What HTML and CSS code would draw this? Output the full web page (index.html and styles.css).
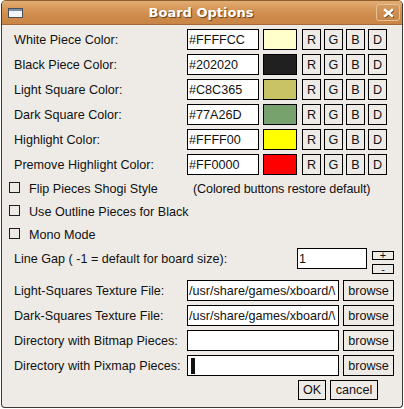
FILE: index.html
```html
<!DOCTYPE html>
<html>
<head>
<meta charset="utf-8">
<title>Board Options</title>
<link rel="stylesheet" href="styles.css">
</head>
<body>
<div class="window">
  <div class="titlebar">
    <svg class="winicon" width="15" height="10" viewBox="0 0 15 10">
      <rect x="0.5" y="0.5" width="14" height="9" fill="#e9ecef" stroke="#4a4f57"/>
      <rect x="1" y="1" width="13" height="2" fill="#7d8fa6"/>
      <rect x="1" y="3" width="13" height="6" fill="#f4f5f7"/>
    </svg>
    <div class="title">Board Options</div>
    <div class="close">
      <svg width="11" height="10" viewBox="0 0 11 10">
        <path d="M2 2 L9 8 M9 2 L2 8" stroke="#6b3c14" stroke-width="2.6" stroke-linecap="square" transform="translate(0.6,0.8)"/>
        <path d="M2 2 L9 8 M9 2 L2 8" stroke="#ffffff" stroke-width="2.4" stroke-linecap="square"/>
      </svg>
    </div>
  </div>
  <div class="content">
    <div class="colors">
      <div class="row">
        <span class="label">White Piece Color:</span>
        <span class="field">#FFFFCC</span>
        <span class="swatch sw-white"></span>
        <span class="btn">R</span><span class="btn">G</span><span class="btn">B</span><span class="btn">D</span>
      </div>
      <div class="row">
        <span class="label">Black Piece Color:</span>
        <span class="field">#202020</span>
        <span class="swatch sw-black"></span>
        <span class="btn">R</span><span class="btn">G</span><span class="btn">B</span><span class="btn">D</span>
      </div>
      <div class="row">
        <span class="label">Light Square Color:</span>
        <span class="field">#C8C365</span>
        <span class="swatch sw-light"></span>
        <span class="btn">R</span><span class="btn">G</span><span class="btn">B</span><span class="btn">D</span>
      </div>
      <div class="row">
        <span class="label">Dark Square Color:</span>
        <span class="field">#77A26D</span>
        <span class="swatch sw-dark"></span>
        <span class="btn">R</span><span class="btn">G</span><span class="btn">B</span><span class="btn">D</span>
      </div>
      <div class="row">
        <span class="label">Highlight Color:</span>
        <span class="field">#FFFF00</span>
        <span class="swatch sw-high"></span>
        <span class="btn">R</span><span class="btn">G</span><span class="btn">B</span><span class="btn">D</span>
      </div>
      <div class="row">
        <span class="label">Premove Highlight Color:</span>
        <span class="field">#FF0000</span>
        <span class="swatch sw-pre"></span>
        <span class="btn">R</span><span class="btn">G</span><span class="btn">B</span><span class="btn">D</span>
      </div>
    </div>

    <div class="checks">
      <div class="check-row">
        <span class="cb"></span>
        <span class="check-text wide">Flip Pieces Shogi Style</span>
        <span class="note">(Colored buttons restore default)</span>
      </div>
      <div class="check-row">
        <span class="cb"></span>
        <span class="check-text">Use Outline Pieces for Black</span>
      </div>
      <div class="check-row">
        <span class="cb"></span>
        <span class="check-text">Mono Mode</span>
      </div>
    </div>

    <div class="gap-row">
      <span class="gap-label">Line Gap ( -1 = default for board size):</span>
      <span class="field gap-field">1</span>
      <div class="spin">
        <span class="spin-btn plus">+</span>
        <span class="spin-btn minus">-</span>
      </div>
    </div>

    <div class="files">
      <div class="row">
        <span class="label">Light-Squares Texture File:</span>
        <span class="field path">/usr/share/games/xboard/\</span>
        <span class="btn browse">browse</span>
      </div>
      <div class="row">
        <span class="label">Dark-Squares Texture File:</span>
        <span class="field path">/usr/share/games/xboard/\</span>
        <span class="btn browse">browse</span>
      </div>
      <div class="row">
        <span class="label">Directory with Bitmap Pieces:</span>
        <span class="field path"></span>
        <span class="btn browse">browse</span>
      </div>
      <div class="row">
        <span class="label">Directory with Pixmap Pieces:</span>
        <span class="field path"><span class="cursor"></span></span>
        <span class="btn browse">browse</span>
      </div>
    </div>

    <div class="actions">
      <span class="btn ok">OK</span>
      <span class="btn cancel">cancel</span>
    </div>
  </div>
</div>
</body>
</html>
```
FILE: styles.css
```css
html, body {
  margin: 0;
  padding: 0;
  background: #ffffff;
}

.window {
  margin-left: 1px;
  width: 402px;
  height: 408px;
  box-sizing: border-box;
  border: 1px solid #3b3a38;
  border-top-color: #8d5b2c;
  border-radius: 5px 5px 4px 4px;
  background: #eeebe7;
  overflow: hidden;
  display: flex;
  flex-direction: column;
  font-family: "Liberation Sans", Arial, sans-serif;
  font-size: 12.6px;
  color: #111111;
}

.titlebar {
  height: 23px;
  flex: none;
  display: grid;
  grid-template-columns: 1fr auto 1fr;
  align-items: center;
  background: linear-gradient(#e2ad74 0%, #d79a5c 30%, #cf8c4c 60%, #c98546 100%);
  border-bottom: 1px solid #a4683a;
  box-sizing: content-box;
}

.winicon {
  margin-left: 6px;
  display: block;
}

.title {
  font-family: "DejaVu Sans", sans-serif;
  font-weight: bold;
  font-size: 13px;
  color: #ffffff;
  text-shadow: 1px 1px 1px #6a3d16;
  margin-left: -2px;
}

.close {
  justify-self: end;
  margin-right: 2px;
  width: 24px;
  height: 17px;
  box-sizing: border-box;
  border: 1px solid #e7c198;
  border-radius: 3px;
  background: linear-gradient(#d49a5f, #c98548);
  display: flex;
  align-items: center;
  justify-content: center;
}

.close svg {
  display: block;
}

.content {
  display: flex;
  flex-direction: column;
  padding-top: 4px;
}

.colors, .files {
  display: flex;
  flex-direction: column;
  gap: 4px;
}

.row {
  display: flex;
  align-items: center;
  height: 21px;
}

.label {
  width: 185px;
  padding-left: 12px;
  box-sizing: border-box;
  flex: none;
  white-space: nowrap;
}

.field {
  width: 72px;
  height: 21px;
  box-sizing: border-box;
  border: 1px solid #000000;
  background: #ffffff;
  padding-left: 1px;
  display: flex;
  align-items: center;
  flex: none;
  white-space: nowrap;
  overflow: hidden;
}

.swatch {
  width: 34px;
  height: 21px;
  box-sizing: border-box;
  border: 1px solid #000000;
  margin-left: 4px;
  flex: none;
}

.sw-white { background: #ffffcc; }
.sw-black { background: #202020; }
.sw-light { background: #c8c365; }
.sw-dark { background: #77a26d; }
.sw-high { background: #ffff00; }
.sw-pre { background: #ff0000; }

.btn {
  height: 21px;
  box-sizing: border-box;
  border: 1px solid #000000;
  background: #eeebe7;
  display: flex;
  align-items: center;
  justify-content: center;
  flex: none;
}

.row .btn {
  width: 19px;
  margin-left: 3px;
}

.row .swatch + .btn {
  margin-left: 5px;
}

.checks {
  display: flex;
  flex-direction: column;
  margin-top: 2px;
}

.check-row {
  display: flex;
  align-items: center;
  height: 23px;
  padding-left: 7px;
}

.cb {
  width: 11px;
  height: 11px;
  box-sizing: border-box;
  border: 1px solid #1e1e1e;
  margin-right: 9px;
  margin-top: -2px;
  flex: none;
}

.check-text {
  white-space: nowrap;
}

.check-text.wide {
  width: 164px;
  flex: none;
}

.note {
  white-space: nowrap;
  letter-spacing: -0.12px;
}

.gap-row {
  display: flex;
  align-items: flex-start;
  height: 28px;
  margin-top: 2px;
}

.gap-label {
  width: 295px;
  padding-left: 12px;
  box-sizing: border-box;
  flex: none;
  height: 21px;
  display: flex;
  align-items: center;
  white-space: nowrap;
}

.gap-field {
  width: 70px;
}

.spin {
  display: flex;
  flex-direction: column;
  gap: 4px;
  margin-left: 5px;
  margin-top: 3px;
}

.spin-btn {
  width: 22px;
  box-sizing: border-box;
  border: 1px solid #000000;
  background: #eeebe7;
  display: flex;
  align-items: center;
  justify-content: center;
  font-size: 11px;
  line-height: 1;
}

.plus {
  height: 9px;
}

.minus {
  height: 10px;
}

.files {
  margin-top: 4px;
}

.path {
  width: 152px;
}

.row .browse {
  width: 51px;
  margin-left: 4px;
}

.cursor {
  display: block;
  width: 4px;
  height: 16px;
  background: #111111;
  margin-left: 2px;
}

.actions {
  display: flex;
  justify-content: flex-end;
  gap: 4px;
  margin-top: 4px;
  padding-right: 24px;
}

.actions .btn {
  height: 20px;
}

.ok {
  width: 28px;
}

.cancel {
  width: 48px;
}
```
